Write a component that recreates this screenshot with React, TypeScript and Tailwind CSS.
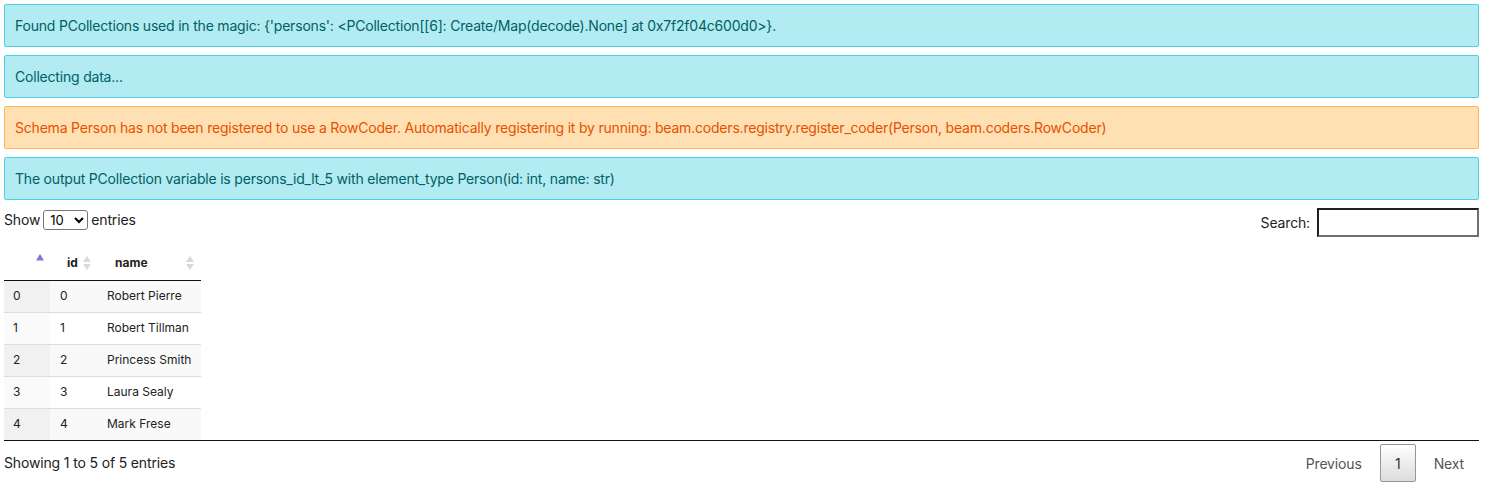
import React from "react";

const rows = [
    {idx: 0, id: 0, name: "Robert Pierre"},
    {idx: 1, id: 1, name: "Robert Tillman"},
    {idx: 2, id: 2, name: "Princess Smith"},
    {idx: 3, id: 3, name: "Laura Sealy"},
    {idx: 4, id: 4, name: "Mark Frese"},
];

function Alert(props: {kind: "info" | "warn"; children: React.ReactNode}) {
    const cls = props.kind === "info"
        ? "bg-[#b2ebf2] border-[#4dd0e1] text-[#006064]"
        : "bg-[#ffe0b2] border-[#ffb74d] text-[#e65100]";
    return (
        <div className={`border rounded-[2px] px-[10px] py-[10px] text-[14px] leading-[21px] tracking-[-0.2px] ${cls}`}>
            {props.children}
        </div>
    );
}

function SortArrows(props: {state: "none" | "asc"}) {
    if (props.state === "asc") {
        return (
            <svg width="8" height="14" viewBox="0 0 8 14" className="shrink-0">
                <path d="M4 0 L8 6.5 L0 6.5 Z" fill="#7a7ad8" />
            </svg>
        );
    }
    return (
        <svg width="8" height="14" viewBox="0 0 8 14" className="shrink-0">
            <path d="M4 0 L8 6 L0 6 Z" fill="#d9d9d9" />
            <path d="M0 8 L8 8 L4 14 Z" fill="#d9d9d9" />
        </svg>
    );
}

export default function App() {
    return (
        <div className="w-[1488px] h-[486px] bg-white text-[#222] font-['Inter',sans-serif] px-[4px] pt-[4px] pr-[9px]">
            <div className="flex flex-col gap-[8px]">
                <Alert kind="info">
                    Found PCollections used in the magic: {"{'persons': <PCollection[[6]: Create/Map(decode).None] at 0x7f2f04c600d0>}"}.
                </Alert>
                <Alert kind="info">Collecting data...</Alert>
                <Alert kind="warn">
                    Schema Person has not been registered to use a RowCoder. Automatically registering it by running: beam.coders.registry.register_coder(Person, beam.coders.RowCoder)
                </Alert>
                <Alert kind="info">
                    The output PCollection variable is persons_id_lt_5 with element_type Person(id: int, name: str)
                </Alert>
            </div>

            <div className="flex justify-between items-start mt-[8px] text-[14px] tracking-[-0.15px]">
                <div className="flex items-center gap-[3px] mt-[1px]">
                    <span>Show</span>
                    <select className="h-[20px] w-[45px] border border-[#767676] rounded-[3px] text-[13px] px-[2px] bg-white text-black">
                        <option>10</option>
                    </select>
                    <span>entries</span>
                </div>
                <label className="flex items-center gap-[7px]">
                    <span>Search:</span>
                    <input className="w-[162px] h-[29px] border-2 border-t-[#1f1f1f] border-l-[#1f1f1f] border-r-[#6f6f6f] border-b-[#6f6f6f] outline-none" />
                </label>
            </div>

            <div className="mt-[9px] border-b border-[#111]">
                <table className="border-collapse text-[12px] text-[#222]">
                    <thead>
                        <tr className="h-[34px] border-b border-[#111]">
                            <th className="w-[46px] p-0 pr-[6px]">
                                <div className="flex justify-end -mt-[4px]">
                                    <SortArrows state="asc" />
                                </div>
                            </th>
                            <th className="w-[47px] p-0 pl-[17px] pr-[6px] text-left font-bold">
                                <div className="flex items-center justify-between">
                                    <span>id</span>
                                    <SortArrows state="none" />
                                </div>
                            </th>
                            <th className="w-[104px] p-0 pl-[18px] pr-[7px] text-left font-bold">
                                <div className="flex items-center justify-between">
                                    <span>name</span>
                                    <SortArrows state="none" />
                                </div>
                            </th>
                        </tr>
                    </thead>
                    <tbody>
                        {rows.map((r, i) => (
                            <tr key={r.idx} className={`h-[32px] ${i > 0 ? "border-t border-[#ddd]" : ""}`}>
                                <td className={`pl-[9px] ${i % 2 === 0 ? "bg-[#f1f1f1]" : "bg-[#fafafa]"}`}>{r.idx}</td>
                                <td className={`pl-[10px] ${i % 2 === 0 ? "bg-[#f9f9f9]" : "bg-white"}`}>{r.id}</td>
                                <td className={`pl-[10px] ${i % 2 === 0 ? "bg-[#f9f9f9]" : "bg-white"}`}>{r.name}</td>
                            </tr>
                        ))}
                    </tbody>
                </table>
            </div>

            <div className="flex justify-between items-center mt-[3px] text-[14px] tracking-[-0.15px]">
                <div className="-mt-[1px]">Showing 1 to 5 of 5 entries</div>
                <div className="flex items-center text-[#333] mr-[15px]">
                    <span className="px-[18px] text-[#555]">Previous</span>
                    <span className="w-[36px] h-[38px] flex items-center justify-center border border-[#979797] rounded-[2px] bg-gradient-to-b from-white to-[#dcdcdc] text-[#333]">1</span>
                    <span className="pl-[18px] text-[#555]">Next</span>
                </div>
            </div>
        </div>
    );
}
